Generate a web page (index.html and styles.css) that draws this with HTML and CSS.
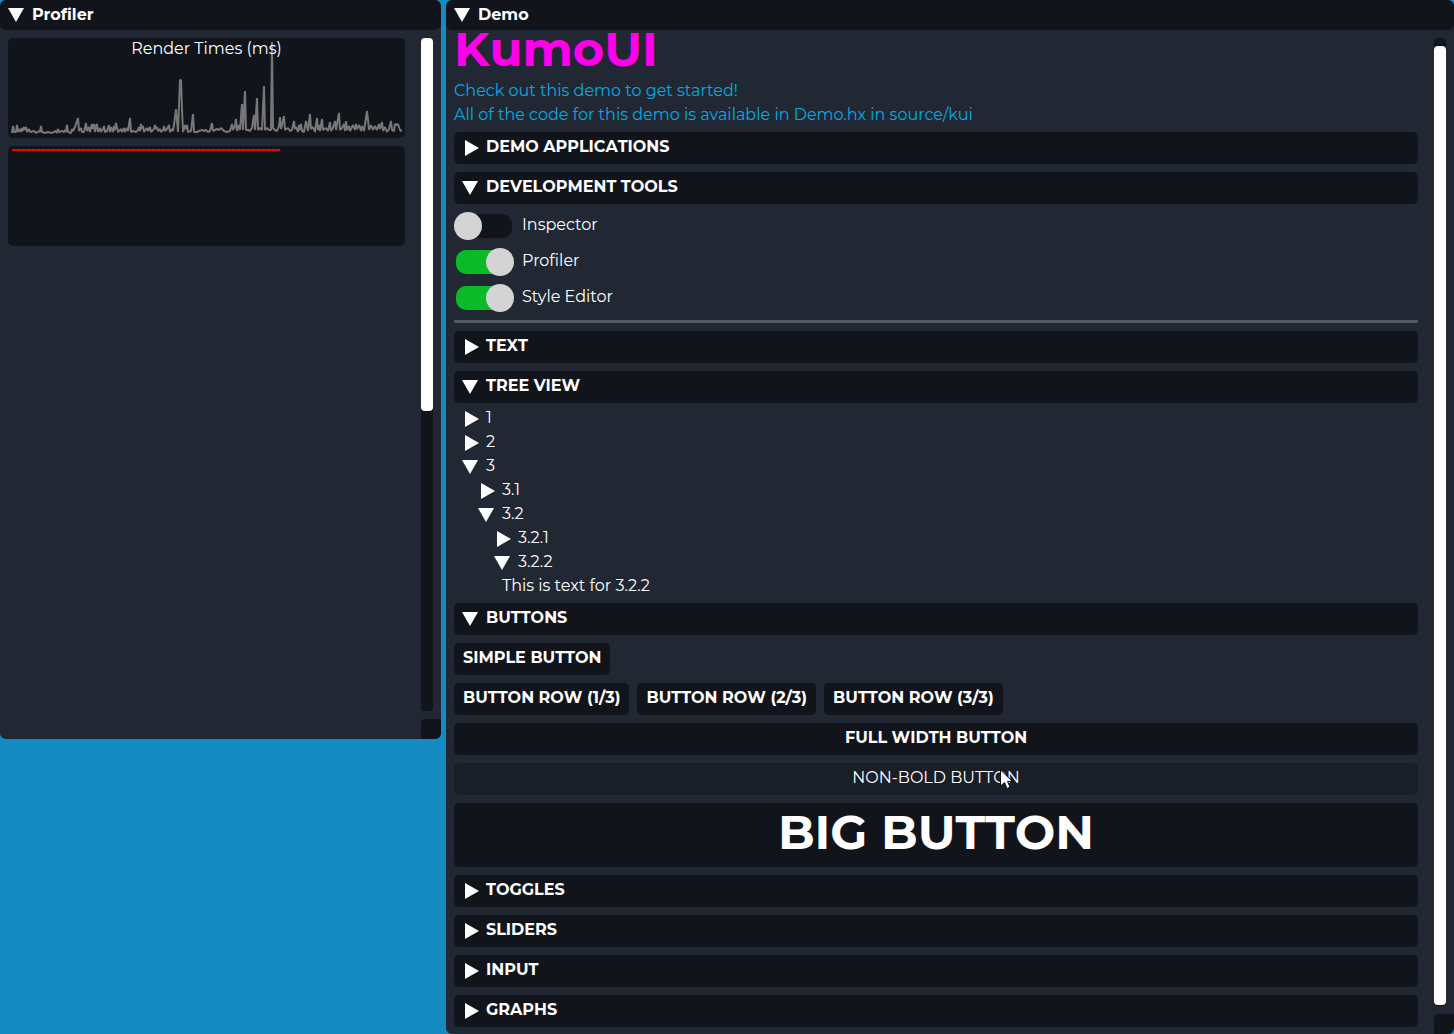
FILE: index.html
```html
<!DOCTYPE html>
<html lang="en">
<head>
<meta charset="utf-8">
<title>KumoUI Demo</title>
<link rel="stylesheet" href="styles.css">
</head>
<body>
<svg class="defs" aria-hidden="true">
  <symbol id="right" viewBox="0 0 18 16"><path d="M3 0L17 8L3 16Z" fill="#fff"/></symbol>
  <symbol id="down" viewBox="0 0 18 16"><path d="M0 1H16L8 15Z" fill="#fff"/></symbol>
</svg>
<main class="desktop">
  <section class="window profiler">
    <header class="titlebar"><button class="collapse"><svg class="arrow"><use href="#down"/></svg>Profiler</button></header>
    <div class="body">
      <div class="content">
        <figure class="plot">
          <figcaption>Render Times (ms)</figcaption>
          <svg viewBox="8 38 397 100" preserveAspectRatio="none"><polyline fill="none" stroke="#777" stroke-width="2" stroke-linejoin="bevel" points="12,133 13,126 14,132 16,132 17,125 18,132 20,129 21,132 22,128 23,131 24,127 25,130 26,127 27,132 29,129 30,132 34,131 36,133 39,131 40,132 41,126 42,132 45,133 48,132 51,133 54,132 56,131 57,133 58,129 59,132 62,131 64,132 65,130 66,132 67,125 68,132 71,133 72,129 73,131 75,127 77,121 78,118 79,131 81,128 82,132 84,132 86,123 87,131 89,127 90,132 92,124 93,129 94,124 95,132 96,126 97,124 98,132 100,128 101,132 103,129 104,126 105,132 107,131 109,125 110,132 111,127 113,132 114,126 115,130 116,123 118,132 121,129 122,132 124,128 125,132 127,128 128,131 130,118 131,132 133,131 136,132 138,130 139,127 140,131 141,124 142,129 143,126 144,132 147,128 148,131 150,127 151,132 154,129 155,125 156,129 157,127 158,131 160,129 161,132 163,130 164,126 165,131 167,129 169,125 170,132 172,129 173,131 174,125 176,109 177,120 178,132 180,80 181,80 182,110 183,132 185,125 186,129 187,125 188,132 191,131 193,114 194,132 197,132 199,131 202,130 204,131 206,130 208,132 210,131 212,123 213,131 215,130 217,129 219,130 221,128 224,131 227,132 230,131 232,124 233,130 235,126 236,119 237,131 239,125 240,130 242,104 243,130 245,91 246,130 248,130 250,131 252,128 254,115 255,130 257,98 258,130 260,128 262,130 264,86 265,130 267,128 269,130 271,130 272,42 273,128 275,130 277,131 279,126 280,117 281,129 284,116 285,130 288,128 290,131 292,130 294,121 295,129 296,127 298,132 299,125 300,130 301,124 302,131 304,132 306,121 308,131 310,114 311,129 313,127 315,132 317,118 318,130 319,125 320,131 322,119 323,130 326,128 328,131 330,122 331,131 333,128 335,121 336,130 339,113 340,130 342,128 344,124 345,131 346,121 347,130 349,126 350,131 353,125 355,130 356,124 357,129 359,125 361,131 362,126 364,131 367,111 368,120 369,130 371,125 373,130 375,126 377,130 379,124 380,129 382,122 383,131 385,127 387,132 389,129 391,121 392,130 394,131 395,124 397,125 398,124 400,130 402,131"/></svg>
        </figure>
        <figure class="plot">
          <svg viewBox="8 146 397 100" preserveAspectRatio="none"><path d="M12 150H280" stroke="#d40000" stroke-width="2"/><path d="M12 150H280" stroke="#ff0000" stroke-width="2" stroke-dasharray="3 2"/></svg>
        </figure>
      </div>
      <div class="rail"><div class="track"><div class="thumb"></div></div><div class="grip"></div></div>
    </div>
  </section>

  <section class="window demo">
    <header class="titlebar"><button class="collapse"><svg class="arrow"><use href="#down"/></svg>Demo</button></header>
    <div class="body">
      <div class="content">
        <h1>KumoUI</h1>
        <p class="text info">Check out this demo to get started!</p>
        <p class="text info">All of the code for this demo is available in Demo.hx in source/kui</p>
        <button class="btn fold" aria-expanded="false"><svg class="arrow"><use href="#right"/></svg>DEMO APPLICATIONS</button>
        <button class="btn fold" aria-expanded="true"><svg class="arrow"><use href="#down"/></svg>DEVELOPMENT TOOLS</button>
        <label class="toggle"><input type="checkbox"><span class="text">Inspector</span></label>
        <label class="toggle"><input type="checkbox" checked><span class="text">Profiler</span></label>
        <label class="toggle"><input type="checkbox" checked><span class="text">Style Editor</span></label>
        <hr>
        <button class="btn fold" aria-expanded="false"><svg class="arrow"><use href="#right"/></svg>TEXT</button>
        <button class="btn fold" aria-expanded="true"><svg class="arrow"><use href="#down"/></svg>TREE VIEW</button>
        <ul class="tree">
          <li><button class="node text"><svg class="arrow"><use href="#right"/></svg>1</button></li>
          <li><button class="node text"><svg class="arrow"><use href="#right"/></svg>2</button></li>
          <li><button class="node text"><svg class="arrow"><use href="#down"/></svg>3</button>
            <ul>
              <li><button class="node text"><svg class="arrow"><use href="#right"/></svg>3.1</button></li>
              <li><button class="node text"><svg class="arrow"><use href="#down"/></svg>3.2</button>
                <ul>
                  <li><button class="node text"><svg class="arrow"><use href="#right"/></svg>3.2.1</button></li>
                  <li><button class="node text"><svg class="arrow"><use href="#down"/></svg>3.2.2</button>
                    <p class="text">This is text for 3.2.2</p></li>
                </ul>
              </li>
            </ul>
          </li>
        </ul>
        <button class="btn fold" aria-expanded="true"><svg class="arrow"><use href="#down"/></svg>BUTTONS</button>
        <div class="row"><button class="btn">SIMPLE BUTTON</button></div>
        <div class="row"><button class="btn">BUTTON ROW (1/3)</button><button class="btn">BUTTON ROW (2/3)</button><button class="btn">BUTTON ROW (3/3)</button></div>
        <button class="btn">FULL WIDTH BUTTON</button>
        <button class="btn light">NON-BOLD BUTTON<svg class="cursor" viewBox="0 0 14 21"><path d="M.5 1V17L4.500 13.500L7 19.500L10 18L7.500 12.500H12.500Z" fill="#fff" stroke="#111" stroke-width="1"/></svg></button>
        <button class="btn big">BIG BUTTON</button>
        <button class="btn fold" aria-expanded="false"><svg class="arrow"><use href="#right"/></svg>TOGGLES</button>
        <button class="btn fold" aria-expanded="false"><svg class="arrow"><use href="#right"/></svg>SLIDERS</button>
        <button class="btn fold" aria-expanded="false"><svg class="arrow"><use href="#right"/></svg>INPUT</button>
        <button class="btn fold" aria-expanded="false"><svg class="arrow"><use href="#right"/></svg>GRAPHS</button>
      </div>
      <div class="rail"><div class="track"><div class="thumb"></div></div><div class="grip"></div></div>
    </div>
  </section>
</main>
</body>
</html>
```
FILE: styles.css
```css
* { box-sizing: border-box; }

body {
  margin: 0;
  background: #148bc3;
  color: #fff;
  font: 400 16px/16px Montserrat, Inter, sans-serif;
}

h1, p, ul, figure { margin: 0; padding: 0; }
ul { list-style: none; }
button { border: 0; margin: 0; color: inherit; font: inherit; text-align: left; }

.defs { position: absolute; width: 0; height: 0; }

.desktop {
  display: grid;
  grid-template-columns: minmax(0, 441px) minmax(0, 1fr);
  gap: 5px;
  align-items: start;
  min-height: 100vh;
}

.window {
  display: flex;
  flex-direction: column;
  background: #222833;
  border-radius: 6px;
  overflow: hidden;
}
.demo { align-self: stretch; }

.titlebar {
  position: relative;
  z-index: 1;
  height: 30px;
  padding: 7px 8px;
  background: #11141b;
  border-radius: 6px;
}
.collapse {
  display: flex;
  align-items: center;
  padding: 0;
  background: none;
  font-weight: 700;
}

.arrow { flex: none; width: 18px; height: 16px; margin-right: 6px; }

.body {
  flex: 1;
  display: grid;
  grid-template-columns: minmax(0, 1fr) 20px;
  gap: 16px;
  padding-left: 8px;
}
.profiler .body { min-height: 709px; }

.content { display: flex; flex-direction: column; gap: 8px; min-width: 0; }
.profiler .content { padding-top: 8px; }
.demo .content { margin-top: -2px; padding-bottom: 7px; }

.rail { display: flex; flex-direction: column; gap: 8px; padding-top: 8px; }
.track { flex: 1; margin-right: 8px; background: #11141b; border-radius: 4px; }
.thumb { background: #fff; border-radius: 4px; height: 373px; }
.demo .track { display: flex; padding: 8px 0 1px; }
.demo .thumb { flex: 1; height: auto; }
.grip { height: 20px; background: #11141b; border-radius: 4px 0 0 0; }

.plot { position: relative; height: 100px; background: #11141b; border-radius: 5px; }
.plot svg { display: block; width: 100%; height: 100%; }
.plot figcaption { position: absolute; top: 3px; width: 100%; text-align: center; }

h1 { height: 48px; font-size: 48px; line-height: 42px; font-kerning: none; color: #ff00ea; }

.text { height: 16px; line-height: 14px; }
.info { color: #02abe3; }

.btn {
  padding: 7px 8px 9px;
  background: #11141b;
  border-radius: 5px;
  font-weight: 700;
  font-kerning: none;
  text-align: center;
}
.fold { display: flex; }
.fold .arrow { margin-top: 1px; margin-bottom: -1px; }
.light { position: relative; background: #1a1e26; font-weight: 400; }
.big { height: 64px; padding: 7px 8px 13px; font-size: 48px; line-height: 44px; }
.row { display: flex; gap: 8px; }
.row .btn { padding: 7px 9px 9px; }

.cursor { position: absolute; left: calc(50% + 64px); top: 6px; width: 14px; height: 21px; }

.toggle { display: flex; align-items: center; gap: 8px; height: 28px; }
.toggle input {
  appearance: none;
  display: flex;
  align-items: center;
  width: 56px;
  height: 24px;
  margin: 0 2px;
  border-radius: 10px;
  background: #11141b;
}
.toggle input::before {
  content: "";
  flex: none;
  width: 28px;
  height: 28px;
  margin-left: -2px;
  border-radius: 50%;
  background: #d4d4d4;
}
.toggle input:checked { background: #0aba28; }
.toggle input:checked::before { margin-left: 30px; }

hr { width: 100%; height: 3px; margin: 0; border: 0; background: #555a64; border-radius: 1px; }

.tree, .tree ul, .tree li { display: flex; flex-direction: column; gap: 8px; }
.tree { padding-left: 8px; }
.tree ul { padding-left: 16px; }
.tree p { padding-left: 8px; }
.node { display: flex; padding: 0; background: none; }
```
